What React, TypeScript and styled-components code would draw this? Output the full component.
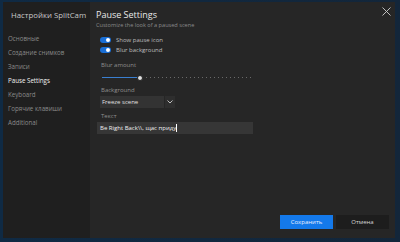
import React from "react";
import styled, { createGlobalStyle } from "styled-components";

const Global = createGlobalStyle`
  html, body { margin: 0; padding: 0; background: #0d1a2a; }
  body { font-family: "Segoe UI", "Open Sans", "Noto Sans", sans-serif; }
  * { box-sizing: border-box; }
  svg { display: block; }
`;

const Frame = styled.div`
  width: 400px;
  height: 242px;
  padding: 2px 5px 4px 3px;
  background: linear-gradient(90deg, #0f2a44 0%, #13263a 100%);
  display: flex;
`;

const Dialog = styled.div`
  flex: 1;
  display: flex;
  background: #262626;
`;

const Sidebar = styled.nav`
  width: 87px;
  background: #1f1f1f;
  display: flex;
  flex-direction: column;
  padding: 8px 0 0 5px;
`;

const SideTitle = styled.div`
  font-size: 7.8px;
  color: #c8c8c8;
  padding-left: 3px;
  line-height: 10px;
  margin-bottom: 12px;
  white-space: nowrap;
`;

const NavItem = styled.div<{ $active?: boolean }>`
  font-size: 6.2px;
  height: 14px;
  line-height: 14px;
  color: ${(p) => (p.$active ? "#f2f2f2" : "#8a8a8a")};
  white-space: nowrap;
`;

const Main = styled.main`
  flex: 1;
  display: flex;
  flex-direction: column;
  padding: 7px 6px 9px 6px;
  position: relative;
`;

const Close = styled.div`
  position: absolute;
  top: 5px;
  right: 4px;
  width: 9px;
  height: 9px;
`;

const Title = styled.div`
  font-size: 9px;
  color: #e8e8e8;
  line-height: 12px;
`;

const Subtitle = styled.div`
  font-size: 5.6px;
  color: #8c8c8c;
  line-height: 8px;
`;

const Toggles = styled.div`
  display: flex;
  flex-direction: column;
  padding-left: 4px;
  margin-top: 6px;
`;

const ToggleRow = styled.div`
  display: flex;
  align-items: center;
  gap: 5px;
  height: 10px;
  font-size: 6px;
  color: #bdbdbd;
`;

const Switch = styled.span`
  width: 11px;
  height: 6px;
  border-radius: 3px;
  background: #1a6fd6;
  position: relative;
  &::after {
    content: "";
    position: absolute;
    right: 1px;
    top: 1px;
    width: 4px;
    height: 4px;
    border-radius: 50%;
    background: #fff;
  }
`;

const Label = styled.div<{ $gap: number }>`
  font-size: 6px;
  color: #8f8f8f;
  padding-left: 5px;
  line-height: 8px;
  margin-top: ${(p) => p.$gap}px;
`;

const SliderWrap = styled.div`
  position: relative;
  height: 10px;
  margin: 4px 0 0 6px;
  width: 152px;
`;

const Track = styled.div`
  position: absolute;
  left: 0;
  right: 0;
  top: 4px;
  height: 1px;
  background: repeating-linear-gradient(90deg, #6a6a6a 0 1px, transparent 1px 4px);
`;

const Fill = styled.div`
  position: absolute;
  left: 0;
  top: 4px;
  height: 1px;
  background: #3a7fd0;
`;

const Thumb = styled.div`
  position: absolute;
  top: 1.5px;
  width: 6px;
  height: 6px;
  border-radius: 50%;
  background: #e0e0e0;
  border: 1px solid #222;
`;

const Select = styled.div`
  display: flex;
  margin: 2px 0 0 4px;
  width: 75px;
  height: 12px;
`;

const SelectValue = styled.div`
  flex: 1;
  background: #333333;
  font-size: 6px;
  color: #e0e0e0;
  line-height: 12px;
  padding-left: 2px;
`;

const SelectBtn = styled.div`
  width: 10px;
  background: #2e2e2e;
  display: flex;
  align-items: center;
  justify-content: center;
  margin-left: 1px;
`;

const TextInput = styled.div`
  margin: 2px 0 0 1px;
  width: 156px;
  height: 12px;
  background: #363636;
  font-size: 6px;
  color: #f0f0f0;
  line-height: 12px;
  padding-left: 3px;
  white-space: nowrap;
`;

const Caret = styled.span`
  display: inline-block;
  width: 1px;
  height: 8px;
  background: #fff;
  vertical-align: middle;
`;

const Footer = styled.div`
  margin-top: auto;
  display: flex;
  justify-content: flex-end;
  gap: 3px;
`;

const Button = styled.div<{ $primary?: boolean }>`
  width: 53px;
  height: 14px;
  background: ${(p) => (p.$primary ? "#1479ea" : "#1d1d1d")};
  color: ${(p) => (p.$primary ? "#e8f0ff" : "#d8d8d8")};
  font-size: 6px;
  line-height: 14px;
  text-align: center;
`;

export default function App() {
  const blur = 25;
  return (
    <>
      <Global />
      <Frame>
        <Dialog>
          <Sidebar>
            <SideTitle>Настройки SplitCam</SideTitle>
            <NavItem>Основные</NavItem>
            <NavItem>Создание снимков</NavItem>
            <NavItem>Записи</NavItem>
            <NavItem $active>Pause Settings</NavItem>
            <NavItem>Keyboard</NavItem>
            <NavItem>Горячие клавиши</NavItem>
            <NavItem>Additional</NavItem>
          </Sidebar>
          <Main>
            <Close>
              <svg width="9" height="9" viewBox="0 0 9 9">
                <path d="M0.5 0.5 L8.5 8.5 M8.5 0.5 L0.5 8.5" stroke="#cfcfcf" strokeWidth="0.9" />
              </svg>
            </Close>
            <Title>Pause Settings</Title>
            <Subtitle>Customize the look of a paused scene</Subtitle>
            <Toggles>
              <ToggleRow>
                <Switch />
                Show pause icon
              </ToggleRow>
              <ToggleRow>
                <Switch />
                Blur background
              </ToggleRow>
            </Toggles>
            <Label $gap={6}>Blur amount</Label>
            <SliderWrap>
              <Track />
              <Fill style={{ width: `${blur}%` }} />
              <Thumb style={{ left: `calc(${blur}% - 3px)` }} />
            </SliderWrap>
            <Label $gap={3}>Background</Label>
            <Select>
              <SelectValue>Freeze scene</SelectValue>
              <SelectBtn>
                <svg width="6" height="4" viewBox="0 0 6 4">
                  <path d="M0.5 0.5 L3 3 L5.5 0.5" stroke="#cfcfcf" strokeWidth="0.9" fill="none" />
                </svg>
              </SelectBtn>
            </Select>
            <Label $gap={4}>Текст</Label>
            <TextInput>
              Be Right Back\\, щас приду<Caret />
            </TextInput>
            <Footer>
              <Button $primary>Сохранить</Button>
              <Button>Отмена</Button>
            </Footer>
          </Main>
        </Dialog>
      </Frame>
    </>
  );
}
